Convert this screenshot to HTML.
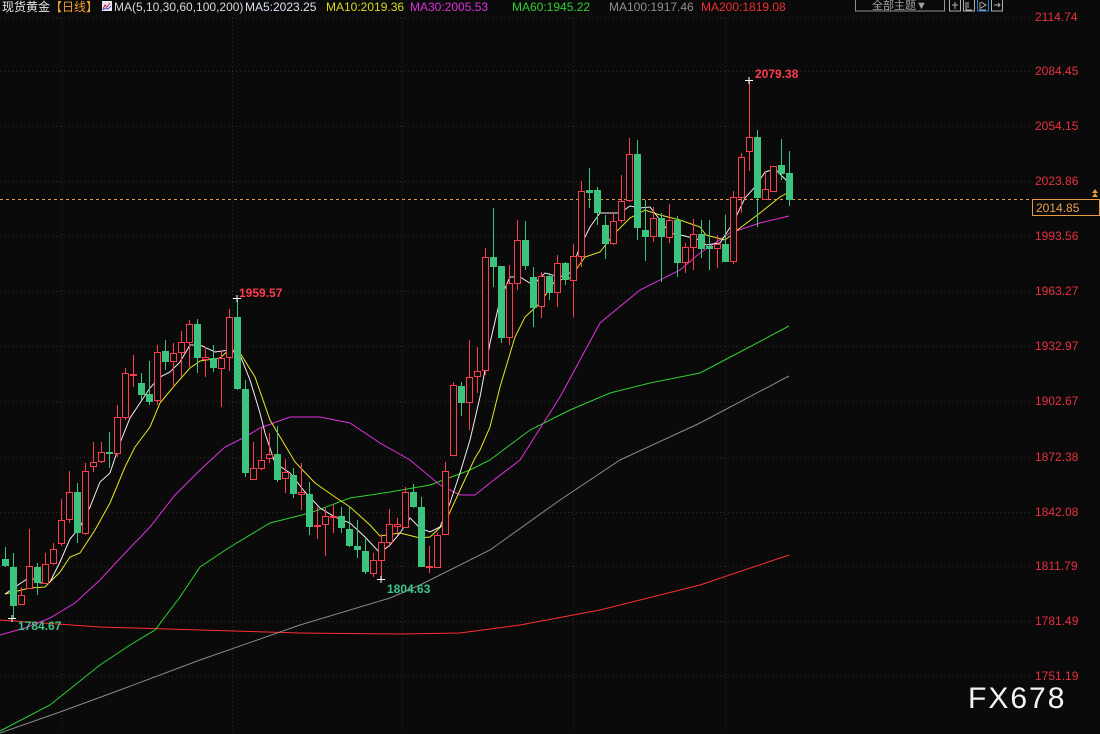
<!DOCTYPE html>
<html><head><meta charset="utf-8"><style>
html,body{margin:0;padding:0;background:#0a0a0a;width:1100px;height:734px;overflow:hidden}
svg{display:block}
text{font-family:"Liberation Sans","Noto Sans CJK SC",sans-serif}
</style></head><body>
<svg width="1100" height="734" viewBox="0 0 1100 734" xmlns="http://www.w3.org/2000/svg">
<rect width="1100" height="734" fill="#0a0a0a"/>
<g stroke="#2e2e2e" stroke-dasharray="1,3" stroke-width="1">
<line x1="0" y1="17.5" x2="1030" y2="17.5"/><line x1="0" y1="71.5" x2="1030" y2="71.5"/><line x1="0" y1="126.5" x2="1030" y2="126.5"/><line x1="0" y1="181.5" x2="1030" y2="181.5"/><line x1="0" y1="236.5" x2="1030" y2="236.5"/><line x1="0" y1="291.5" x2="1030" y2="291.5"/><line x1="0" y1="346.5" x2="1030" y2="346.5"/><line x1="0" y1="401.5" x2="1030" y2="401.5"/><line x1="0" y1="457.5" x2="1030" y2="457.5"/><line x1="0" y1="512.5" x2="1030" y2="512.5"/><line x1="0" y1="566.5" x2="1030" y2="566.5"/><line x1="0" y1="621.5" x2="1030" y2="621.5"/><line x1="0" y1="676.5" x2="1030" y2="676.5"/>
<line x1="62.5" y1="18" x2="62.5" y2="734"/><line x1="232.5" y1="18" x2="232.5" y2="734"/><line x1="402.5" y1="18" x2="402.5" y2="734"/><line x1="573.5" y1="18" x2="573.5" y2="734"/><line x1="725.5" y1="18" x2="725.5" y2="734"/>
</g>
<!-- top bar -->
<rect x="0" y="0" width="1100" height="14" fill="#0a0a0a"/>
<text x="2" y="11" font-size="12" fill="#e8e8e8">现货黄金</text>
<text x="50" y="11" font-size="12" fill="#f0a030">【日线】</text>
<rect x="102" y="1" width="10" height="10" fill="#e8e8f0"/><polyline points="103,9 105,5 107,7 110,3" stroke="#d02040" fill="none"/><polyline points="103,10 106,8 108,9 111,6" stroke="#3050d0" fill="none"/>
<text x="114" y="11" font-size="12" fill="#d8d8d8">MA(5,10,30,60,100,200)</text>
<text x="245" y="11" font-size="12" fill="#d8e0f0">MA5:2023.25</text>
<text x="326" y="11" font-size="12" fill="#d8d820">MA10:2019.36</text>
<text x="410" y="11" font-size="12" fill="#e030e0">MA30:2005.53</text>
<text x="512" y="11" font-size="12" fill="#30d030">MA60:1945.22</text>
<text x="609" y="11" font-size="12" fill="#909090">MA100:1917.46</text>
<text x="701" y="11" font-size="12" fill="#f03030">MA200:1819.08</text>
<rect x="855.5" y="-1" width="89" height="12" fill="none" stroke="#909090"/>
<text x="872" y="9" font-size="11" fill="#a0a0a0">全部主题▼</text>
<g fill="none" stroke="#b0b0b0"><rect x="949.5" y="-1" width="11" height="12"/><rect x="963.5" y="-1" width="11" height="12"/><rect x="977.5" y="-1" width="11" height="12" stroke="#3080e0"/><rect x="991.5" y="-1" width="11" height="12"/>
<path d="M952 5h6M955 2v7M966 2v8h6M968 2v6M980 2v8h6M981 2l5 3-5 3M994 5h6M998 3l2 2-2 2"/></g>
<!-- MA lines -->
<g fill="none" stroke-width="1">
<polyline stroke="#ff3030" points="0,620 100,627 200,630 300,633 400,634 460,633 520,625 600,610 700,585 789,555"/>
<polyline stroke="#8a8a8a" points="0,733 60,712 120,690 200,660 300,625 390,598 420,585 490,550 560,500 620,460 700,423 789,376"/>
<polyline stroke="#30d030" points="0,731 50,705 100,665 130,645 155,630 180,597 200,567 230,547 270,523 310,513 350,498 390,492 430,485 470,470 490,460 530,430 570,410 610,393 650,383 700,373 740,352 789,326"/>
<polyline stroke="#e030e0" points="0,635 25,628 50,618 75,603 100,580 125,553 150,527 175,495 200,470 225,447 245,437 260,428 290,417 320,417 350,423 380,443 410,460 440,485 460,495 475,495 490,483 520,460 560,397 600,323 640,290 680,270 700,253 730,233 760,223 789,216"/>
<polyline stroke="#e8e820" points="5,594 30,588 45,587 60,572 70,557 80,553 95,530 110,503 125,467 135,447 150,427 160,403 175,385 190,368 200,361 220,358 230,349 240,353 255,377 270,420 295,462 315,483 335,497 350,507 370,525 380,536 400,533 420,538 430,537 445,523 460,490 475,458 480,450 490,427 500,387 515,337 525,317 540,303 555,281 570,278 585,257 600,252 615,233 630,218 645,210 660,215 680,220 700,227 706,235 725,240 740,228 760,213 780,197 789,192"/>
<polyline stroke="#f0f0f0" points="5,594 15,587 30,577 40,583 50,582 60,562 70,539 80,527 90,507 100,482 110,473 120,443 130,418 140,403 150,388 160,377 170,372 180,362 190,345 200,345 215,352 230,350 240,355 250,380 260,413 265,433 275,463 290,473 305,492 320,508 335,517 350,523 365,537 380,553 390,545 400,533 410,518 420,528 430,532 440,527 450,503 460,473 470,440 480,397 490,343 500,300 510,277 520,277 533,285 545,273 560,277 570,273 580,247 590,227 600,213 620,213 630,206 640,208 650,207 660,220 670,233 685,236 700,240 706,245 720,243 733,223 745,198 755,187 765,172 775,169 789,183"/>
</g>
<!-- current price line -->
<line x1="0" y1="199.5" x2="1030" y2="199.5" stroke="#e89a40" stroke-dasharray="3,3"/>
<!-- candles -->
<g id="c" stroke-width="1"></g>
<!-- labels -->
<g font-size="12" font-weight="bold">
<text x="239" y="297" fill="#ff3b4e">1959.57</text>
<text x="755" y="78" fill="#ff3b4e">2079.38</text>
<text x="387" y="593" fill="#3cc48a">1804.63</text>
<text x="18" y="630" fill="#3cc48a">1784.67</text>
</g>
<g stroke="#fff"><path d="M233 298.5h8M237 295v7M745 80.5h8M749 77v7M377 579.5h8M381 576v7M8 618.5h8M12 615v7"/></g>
<!-- axis -->
<g font-size="12" fill="#e83040">
<text x="1035" y="21">2114.74</text><text x="1035" y="75">2084.45</text><text x="1035" y="130">2054.15</text><text x="1035" y="185">2023.86</text><text x="1035" y="240">1993.56</text><text x="1035" y="295">1963.27</text><text x="1035" y="350">1932.97</text><text x="1035" y="405">1902.67</text><text x="1035" y="461">1872.38</text><text x="1035" y="516">1842.08</text><text x="1035" y="570">1811.79</text><text x="1035" y="625">1781.49</text><text x="1035" y="680">1751.19</text>
</g>
<rect x="1032.5" y="199.5" width="67" height="16" fill="#0a0a0a" stroke="#e89a40"/>
<text x="1036" y="212" font-size="12" fill="#e8a050">2014.85</text>
<path d="M1092 197l3-4 3 4zM1092 193l3-4 3 4z" fill="#e89a40"/>
<text x="968" y="708" font-size="30" fill="#f4f4f4" letter-spacing="2">FX678</text>
</svg>
<script>
var d=[[5,'G',559,565,547,567],[13,'G',567,605,553,618],[21,'R',595,604,587,605],[29,'R',566,588,529,589],[37,'G',567,582,563,595],[45,'R',564,583,553,583],[53,'R',549,563,543,565],[61,'R',520,543,499,546],[69,'R',492,519,471,523],[77,'G',492,532,483,543],[85,'R',471,533,463,535],[93,'R',462,466,442,472],[101,'R',452,461,442,463],[109,'G',452,453,432,468],[117,'R',417,453,405,457],[125,'R',373,417,368,420],[133,'R',374,375,355,387],[141,'G',383,394,373,400],[149,'G',394,401,361,405],[157,'R',352,400,345,405],[165,'G',351,361,340,370],[173,'R',353,361,343,387],[181,'R',342,352,331,377],[189,'R',324,342,320,367],[197,'G',324,357,319,373],[205,'R',357,359,347,377],[213,'G',358,367,345,372],[221,'R',358,368,350,407],[229,'R',317,357,309,371],[237,'G',317,388,300,390],[245,'G',389,472,380,477],[253,'R',468,479,442,479],[261,'R',460,468,427,470],[269,'R',454,458,433,463],[277,'G',454,479,426,482],[285,'R',472,478,459,493],[293,'G',475,493,468,498],[301,'R',492,494,463,510],[309,'G',494,526,482,535],[317,'R',525,526,507,539],[325,'R',516,524,508,556],[333,'R',516,517,505,533],[341,'G',516,527,507,533],[349,'G',529,545,506,547],[357,'G',546,549,520,558],[365,'G',551,571,539,574],[373,'R',560,573,553,577],[381,'R',542,560,534,580],[389,'R',524,542,509,547],[397,'R',524,526,518,535],[405,'R',492,527,487,527],[413,'G',492,506,484,508],[421,'G',507,566,497,567],[429,'R',566,567,546,573],[437,'R',535,567,533,568],[445,'R',471,534,462,535],[453,'R',385,455,382,455],[461,'G',386,402,382,416],[469,'R',377,402,340,430],[477,'R',371,376,347,393],[485,'R',257,370,248,375],[493,'G',257,266,208,287],[501,'G',266,337,266,343],[509,'R',283,337,265,345],[517,'R',240,283,220,290],[525,'G',240,265,221,270],[533,'G',277,307,267,327],[541,'R',276,306,272,318],[549,'G',276,292,273,300],[557,'R',263,292,255,307],[565,'G',263,279,262,285],[573,'R',256,280,244,317],[581,'R',191,256,181,267],[589,'G',190,192,168,208],[597,'G',190,212,187,225],[605,'G',225,243,215,259],[613,'R',221,243,213,245],[621,'R',201,220,175,223],[629,'R',154,200,138,202],[637,'G',154,227,140,240],[645,'G',230,236,200,261],[653,'R',218,236,207,242],[661,'G',218,236,213,282],[669,'R',220,237,204,243],[677,'G',220,262,216,277],[685,'R',247,262,243,273],[693,'R',234,247,219,270],[701,'G',234,248,220,258],[709,'G',246,248,220,270],[717,'R',244,248,235,268],[725,'G',244,261,215,262],[733,'R',197,261,191,264],[741,'R',157,197,153,213],[749,'R',137,151,80,171],[757,'G',137,197,130,227],[765,'R',189,199,173,199],[773,'R',166,191,166,192],[781,'G',165,173,139,180],[789,'G',173,199,151,206]];
var s='';d.forEach(function(c){var x=c[0],r=c[1]=='R',col=r?'#ff3b4e':'#3cc47e',t=c[2],b=c[3];if(b-t<1)b=t+1;
s+='<line x1="'+(x+.5)+'" y1="'+c[4]+'" x2="'+(x+.5)+'" y2="'+c[5]+'" stroke="'+col+'"/>';
if(r)s+='<rect x="'+(x-2.5)+'" y="'+(t+.5)+'" width="6" height="'+(b-t)+'" fill="#0a0a0a" stroke="'+col+'"/>';
else s+='<rect x="'+(x-3)+'" y="'+t+'" width="7" height="'+(b-t+1)+'" fill="'+col+'"/>';});
document.getElementById('c').innerHTML=s;
</script>
</body></html>
